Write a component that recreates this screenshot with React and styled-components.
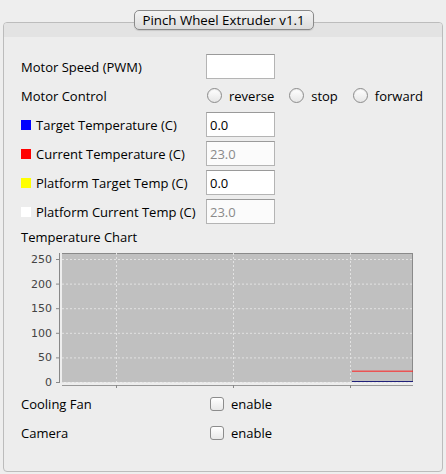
import React from 'react';
import styled, { createGlobalStyle } from 'styled-components';

const GlobalStyle = createGlobalStyle`
    body {
        margin: 0;
        background: #eeeeee;
        font-family: "Open Sans", "DejaVu Sans", sans-serif;
        font-size: 13px;
        color: #000;
    }
`;

const Page = styled.div`
    padding: 10px 3px 0 3px;
    height: 464px;
`;

const TitleBar = styled.div`
    display: flex;
    justify-content: center;
    position: relative;
    z-index: 1;
`;

const TitleButton = styled.div`
    height: 18px;
    width: 178px;
    display: flex;
    align-items: center;
    justify-content: center;
    border: 1px solid #8a8a8a;
    border-radius: 5px;
    background: linear-gradient(#f4f4f4, #dcdcdc);
    box-shadow: 0 1px 1px rgba(0, 0, 0, 0.12);
    font-size: 13.3px;
    color: #000;
    margin-left: 1px;
`;

const Panel = styled.div`
    margin-top: -8px;
    height: 448px;
    border: 1px solid #bcbcbc;
    border-radius: 4px;
    background: #ededed;
    overflow: hidden;
`;

const Band = styled.div`
    height: 14px;
    background: #e3e3e3;
`;

const Body = styled.div`
    padding: 17px 0 0 17px;
`;

const Form = styled.div`
    display: grid;
    grid-template-columns: 185px auto;
    grid-auto-rows: 25px;
    row-gap: 4px;
    align-items: center;
`;

const Label = styled.div`
    display: flex;
    align-items: center;
    gap: 5px;
    white-space: nowrap;
`;

const Swatch = styled.span`
    width: 10px;
    height: 10px;
    background: ${p => p.color};
`;

const Field = styled.input`
    box-sizing: border-box;
    width: 69px;
    height: 25px;
    border: 1px solid #b4b4b4;
    border-top-color: #9a9a9a;
    background: ${p => (p.disabled ? '#fbfbfb' : '#ffffff')};
    padding: 0 3px;
    font-family: inherit;
    font-size: 13px;
    color: ${p => (p.disabled ? '#8a8a8a' : '#000')};
    outline: none;
    -webkit-text-fill-color: ${p => (p.disabled ? '#8a8a8a' : '#000')};
    opacity: 1;
`;

const RadioGroup = styled.div`
    display: flex;
    align-items: center;
    padding-left: 1px;
    gap: 15px;
`;

const Option = styled.label`
    display: flex;
    align-items: center;
    gap: 7px;
`;

const Radio = styled.span`
    box-sizing: border-box;
    width: 15px;
    height: 15px;
    border-radius: 50%;
    border: 1px solid #8c8c8c;
    background: linear-gradient(#ffffff, #e6e6e6);
    box-shadow: inset 0 1px 1px rgba(0, 0, 0, 0.08);
`;

const ChartLabel = styled.div`
    margin-top: 5px;
    height: 16px;
    line-height: 16px;
`;

const ChartBox = styled.div`
    margin-top: 2px;
    height: 146px;
    svg {
        display: block;
    }
`;

const CheckRows = styled.div`
    margin-top: 1px;
    display: grid;
    grid-template-columns: 189px auto;
    grid-auto-rows: 20px;
    row-gap: 9px;
    align-items: center;
`;

const Box = styled.span`
    box-sizing: border-box;
    width: 14px;
    height: 14px;
    border-radius: 3px;
    border: 1px solid #8c8c8c;
    background: linear-gradient(#ffffff, #e8e8e8);
`;

const Check = styled.label`
    display: flex;
    align-items: center;
    gap: 7px;
`;

const ticks = [0, 50, 100, 150, 200, 250];
const yOf = v => 135 - v * 0.492;

function TempChart() {
    return (
        <svg width="400" height="146" viewBox="0 0 400 146">
            <rect x="41" y="6" width="351" height="129" fill="#c0c0c0" />
            <line x1="41" y1="6.5" x2="392" y2="6.5" stroke="#8a8a8a" />
            <line x1="391.5" y1="6" x2="391.5" y2="135" stroke="#8a8a8a" />
            {ticks.map(t => (
                <line key={'h' + t} x1="41" x2="392" y1={yOf(t) + 0.5} y2={yOf(t) + 0.5}
                    stroke="#e2e2e2" strokeDasharray="2 2" />
            ))}
            {[95, 212, 329].map(x => (
                <line key={'v' + x} x1={x + 0.5} x2={x + 0.5} y1="6" y2="135"
                    stroke="#e2e2e2" strokeDasharray="2 2" />
            ))}
            <line x1="331" x2="392" y1={yOf(23) + 0.5} y2={yOf(23) + 0.5} stroke="#ff2020" />
            <line x1="331" x2="392" y1="134.5" y2="134.5" stroke="#20207a" />
            <line x1="38.5" y1="6" x2="38.5" y2="136" stroke="#888" />
            <line x1="41" y1="138.5" x2="392" y2="138.5" stroke="#999" />
            {[95, 212, 329].map(x => (
                <line key={'t' + x} x1={x + 0.5} x2={x + 0.5} y1="138" y2="141" stroke="#888" />
            ))}
            {ticks.map(t => (
                <g key={'l' + t}>
                    <line x1="35" x2="38" y1={yOf(t) + 0.5} y2={yOf(t) + 0.5} stroke="#888" />
                    <text x="31" y={yOf(t) + 4} textAnchor="end" fontSize="11"
                        fontFamily="DejaVu Sans, sans-serif" fill="#444">{t}</text>
                </g>
            ))}
        </svg>
    );
}

function App() {
    return (
        <Page>
            <GlobalStyle />
            <TitleBar>
                <TitleButton>Pinch Wheel Extruder v1.1</TitleButton>
            </TitleBar>
            <Panel>
                <Band />
                <Body>
                    <Form>
                        <Label>Motor Speed (PWM)</Label>
                        <Field defaultValue="" />

                        <Label>Motor Control</Label>
                        <RadioGroup>
                            <Option><Radio />reverse</Option>
                            <Option><Radio />stop</Option>
                            <Option><Radio />forward</Option>
                        </RadioGroup>

                        <Label><Swatch color="#0000ff" />Target Temperature (C)</Label>
                        <Field defaultValue="0.0" />

                        <Label><Swatch color="#ff0000" />Current Temperature (C)</Label>
                        <Field defaultValue="23.0" disabled />

                        <Label><Swatch color="#ffff00" />Platform Target Temp (C)</Label>
                        <Field defaultValue="0.0" />

                        <Label><Swatch color="#ffffff" />Platform Current Temp (C)</Label>
                        <Field defaultValue="23.0" disabled />
                    </Form>
                    <ChartLabel>Temperature Chart</ChartLabel>
                    <ChartBox>
                        <TempChart />
                    </ChartBox>
                    <CheckRows>
                        <Label>Cooling Fan</Label>
                        <Check><Box />enable</Check>
                        <Label>Camera</Label>
                        <Check><Box />enable</Check>
                    </CheckRows>
                </Body>
            </Panel>
        </Page>
    );
}

export default App;
